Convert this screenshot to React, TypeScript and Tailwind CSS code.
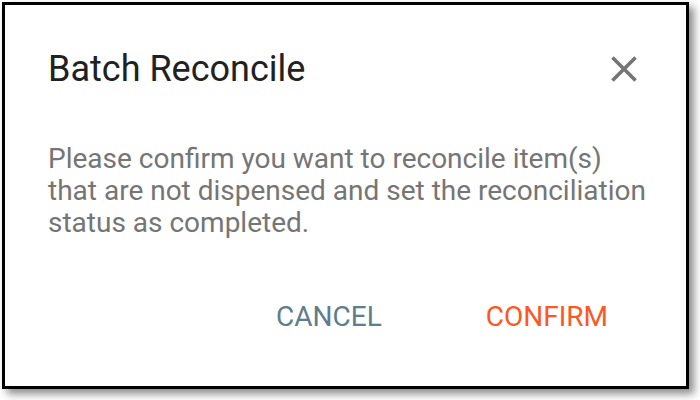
import React from "react";

export default function App() {
  return (
    <div className="w-[700px] h-[400px] bg-white relative" style={{ fontFamily: "Roboto, 'Liberation Sans', sans-serif" }}>
      <div className="absolute left-[2px] top-[2px] w-[687px] h-[387px] border-[3px] border-black bg-white shadow-[5px_5px_8px_rgba(0,0,0,0.45)] flex flex-col pl-[43px] pr-[40px]">
        <div className="flex items-center justify-between mt-[42px]">
          <h1 className="text-[36px] leading-[40px] text-[#212121]">Batch Reconcile</h1>
          <svg width="44" height="44" viewBox="0 0 24 24" fill="#757575">
            <path d="M19 6.41L17.59 5 12 10.59 6.41 5 5 6.41 10.59 12 5 17.59 6.41 19 12 13.41 17.59 19 19 17.59 13.41 12z" />
          </svg>
        </div>
        <p className="mt-[52px] text-[28px] leading-[32px] text-[#757575]">
          Please confirm you want to reconcile item(s)
          <br />
          that are not dispensed and set the reconciliation
          <br />
          status as completed.
        </p>
        <div className="flex justify-end gap-[104px] mt-[62px] pr-[38px]">
          <button className="text-[28px] leading-[32px] text-[#607d8b]">CANCEL</button>
          <button className="text-[28px] leading-[32px] text-[#ff5722]">CONFIRM</button>
        </div>
      </div>
    </div>
  );
}
